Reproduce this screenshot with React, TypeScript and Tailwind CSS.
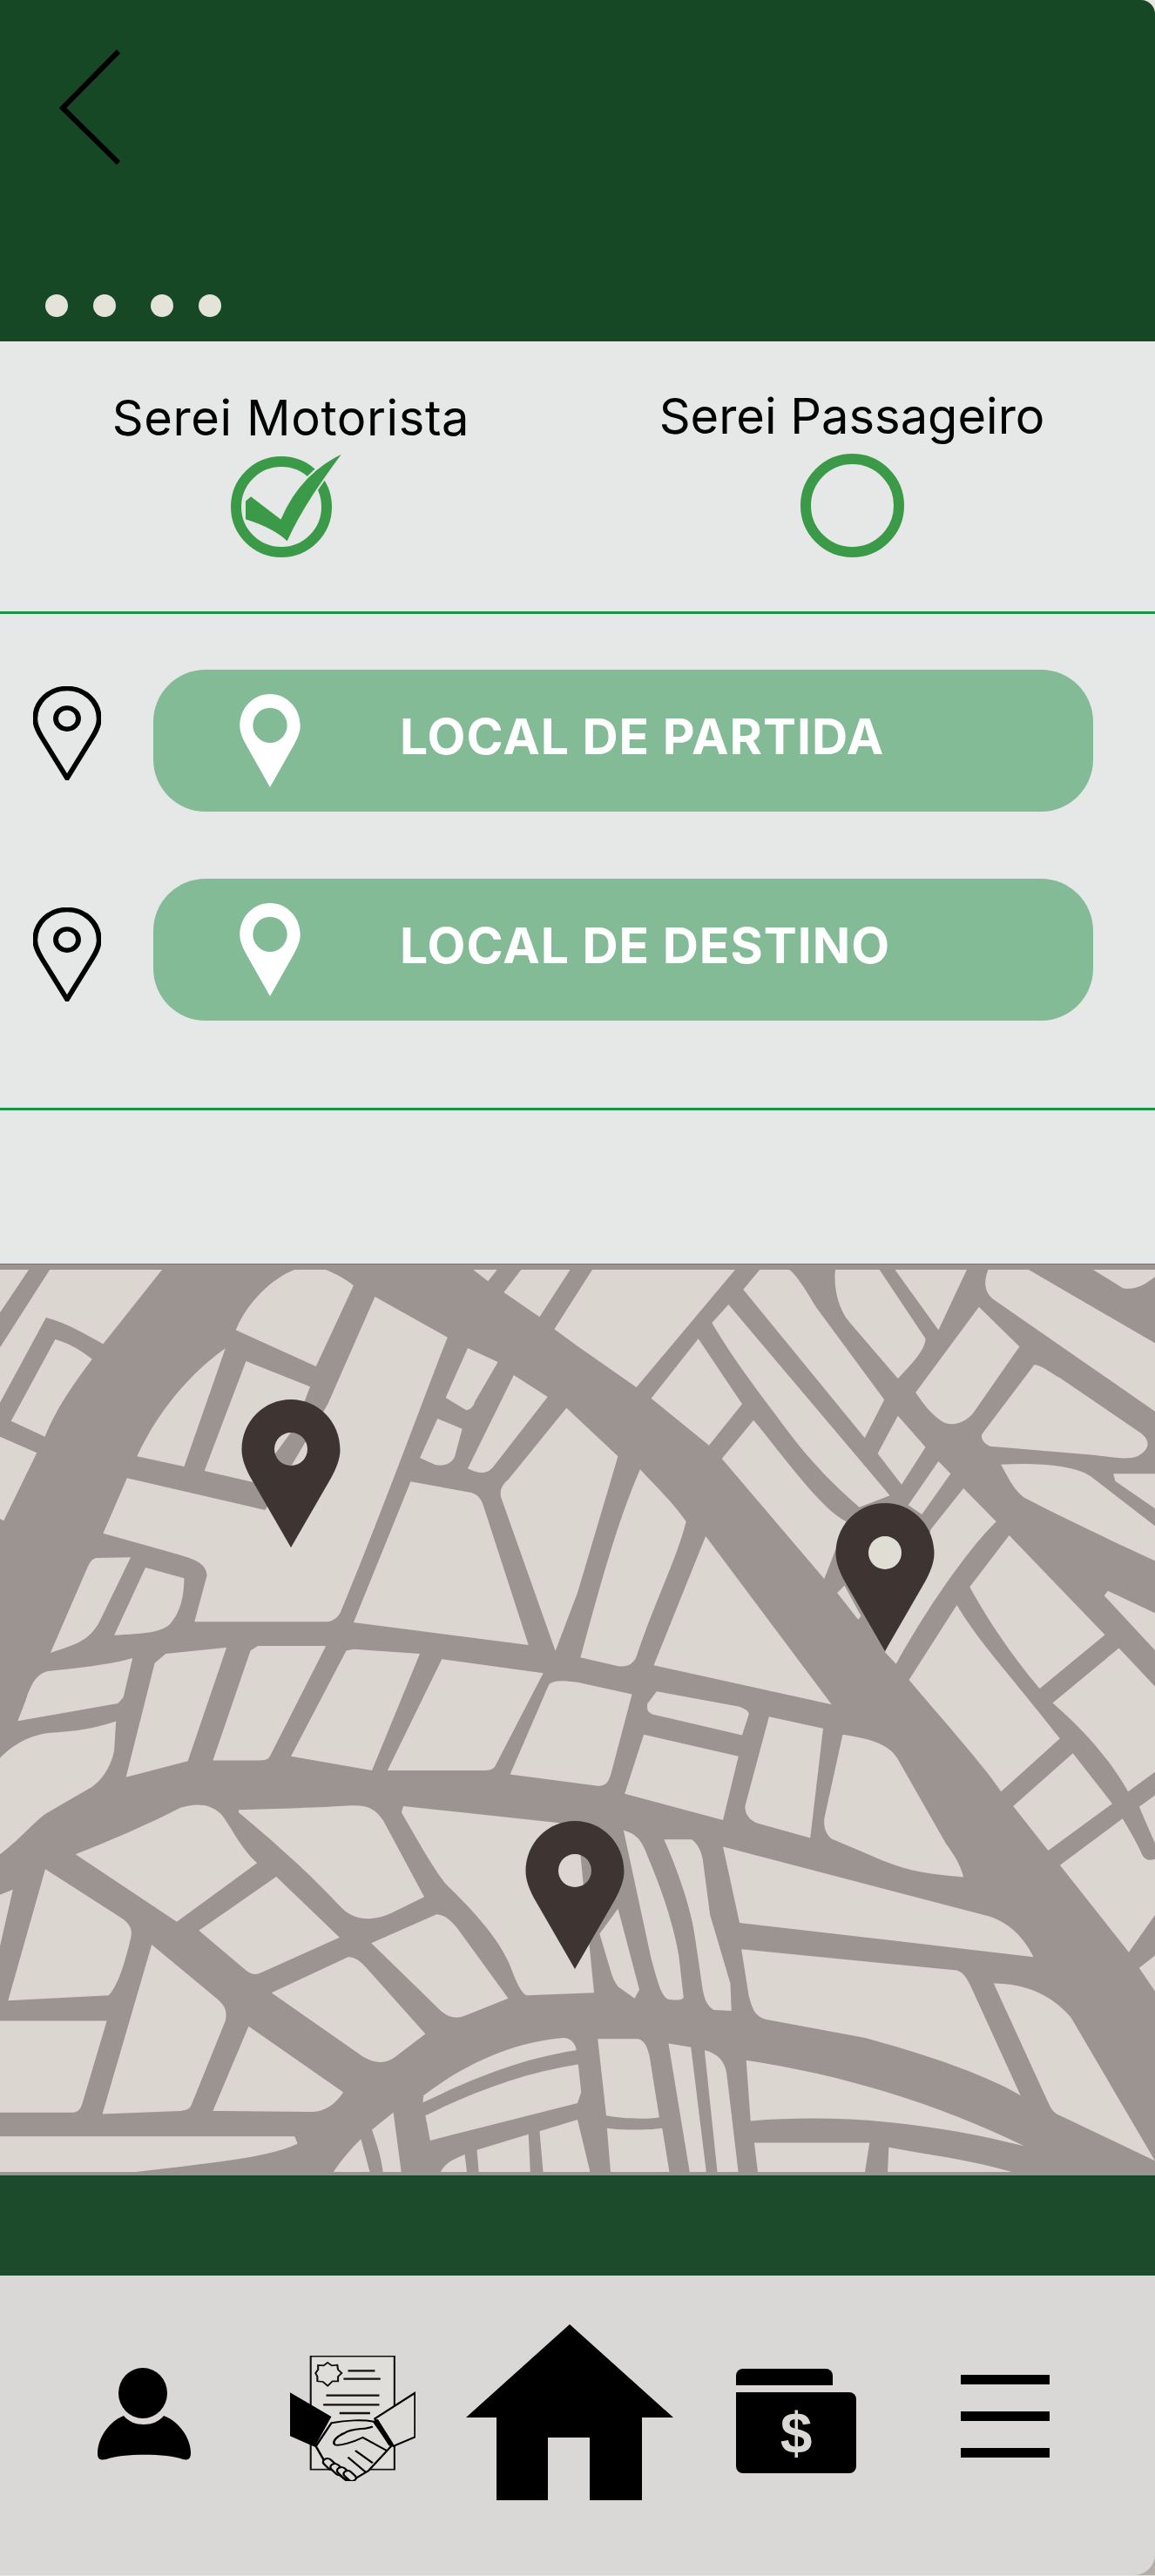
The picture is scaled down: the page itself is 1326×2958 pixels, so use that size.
import React from 'react';

const FONT = 'font-["Inter",sans-serif]';

const pinPath = (hole: number) =>
  `M0 0C31 0 56.5 25 56.5 58C56.5 68 52 80 45 92L0 170L-45 92C-52 80 -56.5 68 -56.5 58C-56.5 25 -31 0 0 0Z` +
  `M0 ${57 - hole}A${hole} ${hole} 0 1 0 0 ${57 + hole}A${hole} ${hole} 0 1 0 0 ${57 - hole}Z`;

// blocks traced per quadrant, each in its own zoomed coordinates
const topLeft = [
  'M0 57L78 57L0 205Z',
  'M135 57L440 57L280 313C220 270 170 235 125 222L0 515L0 325Z',
  'M150 297C190 310 225 340 250 365C200 450 150 540 122 632L30 578Z',
  'M0 632L100 688L10 922L0 915Z',
  'M640 265C670 170 740 85 800 57L885 57C910 70 940 90 960 112L858 390Z',
  'M1018 150L1215 290C1150 500 1050 850 930 1220C920 1260 900 1270 880 1270L528 1270L562 1110C560 1070 530 1055 490 1040L280 965L345 775L720 885L890 520Z',
  'M612 328L500 735L372 700C430 540 520 410 612 328Z',
  'M668 372L842 460L800 600L690 790L555 750Z',
  'M1270 327L1352 375L1290 510C1285 530 1275 542 1265 540L1210 498Z',
  'M1188 570L1255 605L1235 700C1225 730 1200 735 1180 728L1140 705Z',
  'M1395 420L1487 495L1340 735C1325 758 1305 765 1270 742Z',
  'M1538 533L1678 700L1568 1170L1508 1370L1360 840C1355 810 1370 790 1380 780Z',
  'M1115 787L1280 825C1305 835 1310 860 1315 880L1435 1350L960 1272Z',
  'M260 1050L355 1048L270 1270C240 1340 200 1350 137 1377L235 1090C245 1060 250 1055 260 1050Z',
  'M395 1083L500 1120C500 1180 490 1240 460 1280C430 1310 380 1310 310 1316Z',
  'M1285 57L1350 57L1325 97Z',
  'M1415 57L1548 57L1465 220L1368 135Z',
  'M360 1395L335 1530L320 1551L48 1612L70 1540C85 1480 100 1450 130 1440C200 1430 290 1420 360 1395Z',
];

const topRight = [
  'M40 57L428 57L160 462L0 320L-63 262Z',
  'M450 125L495 57L575 57C600 80 630 150 650 190L833 505L780 637Z',
  'M365 240L410 177L848 835L765 875C680 780 620 700 540 560C480 460 410 340 365 240Z',
  'M700 57L820 57L945 295C945 330 910 380 870 432L740 240C705 190 695 110 700 57Z',
  'M862 57L1057 57L980 265Z',
  'M1115 57L1225 57L1568 310L1568 545L1130 160C1100 130 1105 90 1115 57Z',
  'M1400 57L1568 57L1568 82C1540 110 1510 130 1480 120Z',
  'M1090 185L1200 322L1075 550C1050 590 1010 600 985 575C955 550 935 510 918 480Z',
  'M1240 385C1260 385 1280 410 1310 430L1530 620C1560 650 1550 680 1520 700C1490 715 1440 700 1400 695L1120 665C1095 650 1095 630 1100 620Z',
  'M328 295L447 520L357 662L200 500Z',
  'M478 575C560 700 660 880 730 925L670 1122L392 708Z',
  'M705 1170L725 1145L770 1250L762 1262Z',
  'M870 560L945 668L880 797L815 690Z',
  'M980 717L1013 760L935 900L898 868Z',
  'M1048 810L1137 925C1060 1020 950 1220 865 1415L835 1375L960 950Z',
  'M1150 728C1250 722 1350 730 1395 770L1568 940L1568 1060C1450 990 1330 920 1225 850C1190 830 1170 775 1150 728Z',
  'M1455 760L1568 760L1568 880L1460 785Z',
  'M1172 972L1432 1315L1255 1500C1200 1420 1120 1280 1065 1150Z',
  'M1440 1163L1568 1240L1568 1368L1430 1180Z',
  'M1030 1212C1090 1340 1160 1430 1310 1672L1150 1855C1100 1760 1000 1620 900 1470Z',
  'M170 745C210 800 260 860 295 925C270 1050 210 1200 160 1390C150 1420 130 1430 100 1420L8 1393C50 1200 100 950 170 745Z',
  'M348 975L690 1555L207 1420Z',
];

const bottomLeft = [
  'M315 77C260 100 200 110 130 115C70 125 30 160 0 195L0 505C60 450 100 390 130 370L240 295C280 270 305 210 310 170Z',
  'M450 -140L615 -160L510 205L342 257L420 -110Z',
  'M700 -165L885 -165L735 185C730 200 720 203 705 203L578 203L680 -150Z',
  'M960 -155L1140 -140L1010 235L790 190L940 -150Z',
  'M1200 -123L1475 -78L1345 220C1340 232 1330 235 1320 235L1052 235Z',
  'M1490 -40C1500 -55 1530 -55 1568 -48L1716 -10L1658 250C1650 280 1640 285 1623 285L1385 248Z',
  'M205 505C300 460 400 410 490 355C530 340 570 340 600 375C630 420 650 480 698 533L480 722Z',
  'M648 362C750 358 870 355 950 348C1000 345 1020 360 1040 395L1152 642L1060 695C1020 715 970 725 930 680C860 590 770 490 648 370Z',
  'M1095 350L1568 410L1613 950L1430 958C1410 950 1395 890 1380 850C1350 770 1280 680 1210 600C1165 530 1130 450 1090 370Z',
  'M750 577L922 772L710 885C690 895 680 890 665 875L540 750Z',
  'M1185 698C1210 700 1225 720 1240 740L1380 968L1260 1025C1235 1035 1215 1030 1190 1000L1008 790Z',
  'M945 835C965 835 980 850 995 870L1155 1082L1085 1145C1055 1175 1030 1185 985 1155L737 950Z',
  'M123 552L330 710C355 730 360 750 355 775C340 850 320 930 295 958L22 975Z',
  'M0 635L35 618L0 800Z',
  'M412 795L590 970C610 990 618 1010 612 1040L520 1310C515 1325 505 1328 490 1330L278 1340Z',
  'M0 1040L290 1040L225 1300C218 1330 210 1335 195 1335L0 1335Z',
  'M675 1058L932 1270C910 1310 880 1335 840 1333L578 1330Z',
  'M0 1412L800 1412L808 1435C740 1475 620 1490 450 1515L340 1530L0 1530Z',
  'M1150 1280C1250 1190 1380 1110 1530 1095C1555 1095 1565 1125 1565 1135C1400 1165 1270 1235 1148 1303Z',
  'M1155 1345C1290 1265 1430 1205 1570 1180L1578 1270L1568 1305L1168 1425Z',
  'M1010 1390L1068 1335L1090 1530L1040 1530C1035 1470 1020 1430 1010 1390Z',
  'M980 1420L1005 1530L903 1530C925 1490 950 1455 980 1420Z',
  'M1262 1470L1268 1530L1195 1530C1205 1500 1230 1485 1262 1470Z',
  'M1295 1455L1435 1405L1440 1530L1300 1530Z',
  'M1465 1395L1568 1358L1603 1530L1475 1530Z',
];

const bottomRight = [
  'M125 428C160 440 175 460 190 510C230 620 260 730 275 830L288 965C285 975 260 975 245 970C225 960 215 900 200 840Z',
  'M60 760L110 680L168 940L155 968L110 930C100 915 95 900 90 880Z',
  'M235 457L310 457C325 470 335 490 340 520L360 700L415 920L418 1008L370 1005C350 990 345 970 340 940L320 780C310 680 270 550 235 457Z',
  'M180 120L437 190L395 395L128 310Z',
  'M215 -19L440 30C460 40 465 45 465 55L447 122L205 55C190 48 188 40 190 20Z',
  'M520 62L667 100L632 452L490 405C465 395 455 375 455 350Z',
  'M720 120C800 135 850 150 875 210L1000 470C1025 510 1040 540 1048 578C950 570 880 555 800 510L690 455C675 440 668 420 670 390Z',
  'M395 480L1120 705C1180 730 1215 780 1238 835L440 725Z',
  'M445 810L1030 878C1050 885 1060 910 1070 935L1203 1280C1100 1210 950 1150 780 1095L510 1035C480 1025 475 1000 465 960Z',
  'M1130 920C1220 920 1290 960 1340 1030L1568 1490L1310 1345C1290 1335 1285 1320 1275 1295Z',
  'M458 1167C750 1220 1000 1320 1213 1443C1000 1380 750 1335 470 1362Z',
  'M480 1432L793 1432L780 1530L490 1530Z',
  'M845 1447C950 1470 1080 1490 1190 1530L842 1530Z',
  'M55 1098L165 1098C185 1105 190 1130 195 1150L222 1350C190 1358 120 1355 78 1345Z',
  'M80 1385C120 1392 190 1392 230 1385L250 1530L90 1530Z',
  'M247 1113L308 1125L350 1530L305 1530Z',
  'M345 1135C380 1145 400 1170 405 1210L437 1530L380 1530Z',
  'M1290 18L1470 -158L1568 -35L1568 240L1495 303C1440 190 1370 100 1290 18Z',
  'M1183 350L1345 180L1452 342L1278 493Z',
  'M1480 390C1500 430 1520 470 1535 510C1545 525 1555 525 1568 520L1568 700L1497 820L1310 540Z',
  'M1525 352L1568 315L1568 470Z',
  'M1525 870L1568 830L1568 945Z',
];

const MapView = () => (
  <div className="h-[1047px] border-t border-[#78736d] bg-[#9b9490] pt-[6px]">
    <svg viewBox="0 1459 1326 1036" className="block h-[1036px] w-[1326px]">
      <g fill="#dbd6d0">
        <g transform="translate(0 1440) scale(0.42283 0.33333)">
          {topLeft.map((d) => <path key={d} d={d} />)}
        </g>
        <g transform="translate(663 1440) scale(0.42283 0.33333)">
          {topRight.map((d) => <path key={d} d={d} />)}
        </g>
        <g transform="translate(0 1950) scale(0.42283 0.35714)">
          {bottomLeft.map((d) => <path key={d} d={d} />)}
        </g>
        <g transform="translate(663 1950) scale(0.42283 0.35714)">
          {bottomRight.map((d) => <path key={d} d={d} />)}
        </g>
      </g>
      <circle cx="1016" cy="1784" r="20" fill="#e0ddd5" />
      <g fill="#3e3432" fillRule="evenodd">
        <path transform="translate(334 1608)" d={pinPath(19)} />
        <path transform="translate(1016 1727)" d={pinPath(19)} />
        <path transform="translate(660 2092)" d={pinPath(19)} />
      </g>
    </svg>
  </div>
);

const LocationRow = ({ label, pinTop }: { label: string; pinTop: string }) => (
  <div className="flex items-start">
    <svg viewBox="-60 -4 120 178" preserveAspectRatio="none" className={`h-[108px] w-[78px] ${pinTop}`}>
      <path d={pinPath(0)} fill="none" stroke="#000" strokeWidth="9" />
      <circle cx="0" cy="57" r="20" fill="none" stroke="#000" strokeWidth="9" />
    </svg>
    <div className="ml-[60px] flex h-[163px] w-[1079px] items-center rounded-[60px] bg-[#83bb97]">
      <svg viewBox="-57 0 114 170" preserveAspectRatio="none" className="ml-[99px] h-[107px] w-[70px]">
        <path d={pinPath(32)} fill="#fff" fillRule="evenodd" />
      </svg>
      <span className={`ml-[114px] pb-[10px] text-[57px] leading-none font-bold tracking-[1px] whitespace-nowrap text-white ${FONT}`}>
        {label}
      </span>
    </div>
  </div>
);

const ContractIcon = () => (
  <svg viewBox="788 678 340 432" preserveAspectRatio="none" className="mt-[92px] ml-[114px] h-[144px] w-[144px]">
    <rect x="844" y="680" width="227" height="390" fill="#dfdedb" stroke="#111" strokeWidth="5" />
    <path
      d="M890 702L901 712L916 710L918 726L928 738L918 750L918 766L903 766L890 782L877 768L862 766L862 750L857 738L864 726L864 711L879 712Z"
      fill="none"
      stroke="#111"
      strokeWidth="5"
    />
    <path
      d="M945 730H1018M933 758H1033M886 815H1030M878 847H1030M922 876H1005"
      stroke="#111"
      strokeWidth="7"
      fill="none"
    />
    <path d="M788 805L900 888L855 992L788 955Z" fill="#000" />
    <path d="M1127 806V958L1068 990L1018 895Z" fill="#dcdbd8" stroke="#000" strokeWidth="6" />
    <path
      d="M900 910C940 900 985 898 1015 905L1062 990L1000 1075L960 1105L940 1108L885 1050L858 990Z"
      fill="#dcdbd8"
      stroke="#000"
      strokeWidth="6"
    />
    <path d="M1020 900L1062 985" stroke="#000" strokeWidth="14" />
    <path
      d="M1012 922C990 935 960 925 935 945C915 955 900 975 910 985C925 990 960 975 985 960L1050 1005M965 1005L1012 1048M945 1028L992 1078"
      fill="none"
      stroke="#000"
      strokeWidth="6"
    />
    <g fill="#dcdbd8" stroke="#000" strokeWidth="6">
      <rect x="-12" y="-22" width="24" height="44" rx="12" transform="translate(896 1052) rotate(-40)" />
      <rect x="-12" y="-22" width="24" height="44" rx="12" transform="translate(916 1070) rotate(-40)" />
      <rect x="-12" y="-22" width="24" height="44" rx="12" transform="translate(934 1082) rotate(-40)" />
      <rect x="-11" y="-20" width="22" height="40" rx="11" transform="translate(950 1092) rotate(-40)" />
    </g>
  </svg>
);

const BottomNav = () => (
  <div className="bg-[#b5aea8]">
    <div className="flex h-[344px] items-start rounded-br-[24px] bg-[#d9d8d6] pl-[112px]">
      <svg viewBox="0 0 107 106" className="mt-[106px] h-[106px] w-[107px]">
        <ellipse cx="52" cy="29" rx="28" ry="29" fill="#000" />
        <path
          d="M30 55C36 62 44 65 53 65C62 65 70 62 76 55C95 62 107 82 107 98C107 106 102 106 98 105C80 98 28 98 10 105C4 106 0 106 0 98C0 82 12 62 30 55Z"
          fill="#000"
        />
      </svg>
      <ContractIcon />
      <svg viewBox="535 2670 238 202" className="mt-[56px] ml-[58px] h-[202px] w-[238px]">
        <path d="M654 2670L773 2777H737V2872H677V2800H629V2872H570V2777H535Z" fill="#000" />
      </svg>
      <div className="mt-[107px] ml-[72px] flex w-[138px] flex-col gap-[8px]">
        <div className="h-[19px] w-[111px] rounded-t-[8px] bg-black" />
        <div className="flex h-[93px] items-center justify-center rounded-[8px] rounded-tl-none bg-black">
          <span className='font-["Liberation_Sans",sans-serif] text-[66px] leading-none font-bold text-[#d9d8d6]'>$</span>
        </div>
      </div>
      <div className="mt-[114px] ml-[120px] flex w-[102px] flex-col gap-[31px]">
        <div className="h-[11px] bg-black" />
        <div className="h-[11px] bg-black" />
        <div className="h-[11px] bg-black" />
      </div>
    </div>
  </div>
);

export default function App() {
  return (
    <div className={`flex h-[2958px] w-[1326px] flex-col overflow-hidden bg-[#e8e6e0] ${FONT}`}>
      {/* Header */}
      <div className="flex h-[392px] flex-col rounded-tr-[16px] bg-[#164825] pt-[57px] pl-[68px]">
        <svg viewBox="0 0 70 132" className="h-[132px] w-[70px]">
          <path d="M68 2L4 67L68 130" fill="none" stroke="#000" strokeWidth="6" />
        </svg>
        <div className="mt-[149px] -ml-[16px] flex">
          <div className="h-[26px] w-[26px] rounded-full bg-[#e3e3da]" />
          <div className="ml-[29px] h-[26px] w-[26px] rounded-full bg-[#e3e3da]" />
          <div className="ml-[40px] h-[26px] w-[26px] rounded-full bg-[#e3e3da]" />
          <div className="ml-[29px] h-[26px] w-[26px] rounded-full bg-[#e3e3da]" />
        </div>
      </div>

      {/* Role choice */}
      <div className="flex h-[313px] border-b-[3px] border-[#1a9348] bg-[#e6e7e7]">
        <div className="flex w-[668px] flex-col items-center pt-[56px]">
          <span className="text-[56px] leading-[64px] tracking-[0.6px] text-black">Serei Motorista</span>
          <svg viewBox="262 516 135 127" className="mt-[4px] -ml-[6px] h-[127px] w-[135px]">
            <circle cx="321" cy="582" r="52" fill="none" stroke="#3a9a48" strokeWidth="12" />
            <path
              d="M286 569L320 595C335 560 358 535 393 519C370 550 345 585 328 623C315 610 295 602 279 597L279 575Z"
              fill="#3a9a48"
              stroke="#e6e7e7"
              strokeWidth="2"
            />
          </svg>
        </div>
        <div className="flex w-[620px] flex-col items-center pt-[54px]">
          <span className="text-[56px] leading-[64px] text-black">Serei Passageiro</span>
          <div className="mt-[11px] h-[119px] w-[119px] rounded-full border-[12px] border-[#3a9a48]" />
        </div>
      </div>

      {/* Locations */}
      <div className="flex h-[570px] flex-col gap-[77px] border-b-[3px] border-[#1a9348] bg-[#e6e7e7] pt-[64px] pl-[38px]">
        <LocationRow label="LOCAL DE PARTIDA" pinTop="mt-[19px]" />
        <LocationRow label="LOCAL DE DESTINO" pinTop="mt-[33px]" />
      </div>

      <div className="h-[176px] bg-[#e6e7e7]" />

      <MapView />

      <div className="h-[115px] bg-[#1c4b2c]" />

      <BottomNav />
    </div>
  );
}
